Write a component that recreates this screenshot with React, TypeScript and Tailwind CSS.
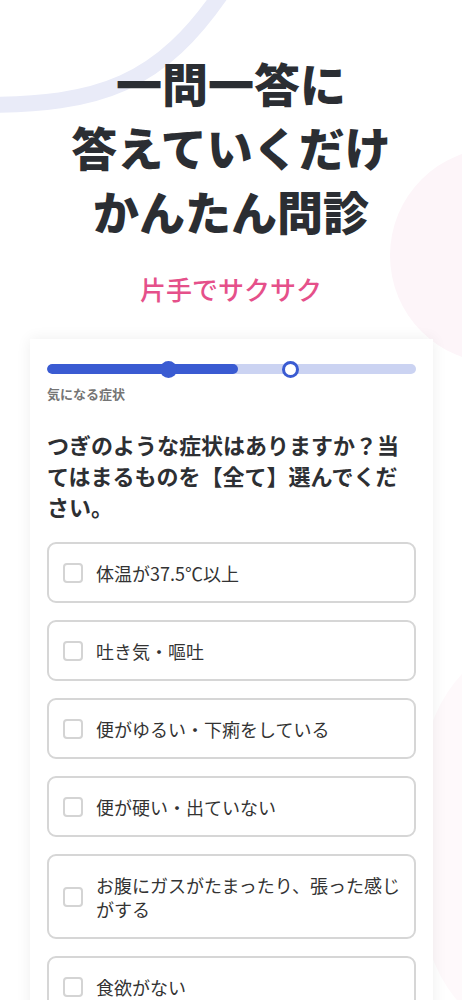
import React from "react";

const options: string[] = [
  "体温が37.5℃以上",
  "吐き気・嘔吐",
  "便がゆるい・下痢をしている",
  "便が硬い・出ていない",
  "お腹にガスがたまったり、張った感じがする",
  "食欲がない",
];

function Progress() {
  return (
    <div className="relative flex h-4 w-full items-center">
      <div className="flex h-[10px] w-full overflow-hidden rounded-full bg-[#cbd3f2]">
        <div className="h-full w-[191px] rounded-full bg-[#3a5bd2]" />
      </div>
      <span className="absolute left-[113px] h-[17px] w-[17px] rounded-full bg-[#3a5bd2]" />
      <span className="absolute left-[235px] h-[17px] w-[17px] rounded-full border-[3px] border-[#3a5bd2] bg-white" />
    </div>
  );
}

export default function App() {
  return (
    <div
      className="relative min-h-[1000px] w-full overflow-hidden bg-white"
      style={{ fontFamily: '"Noto Sans CJK JP", "Noto Sans", sans-serif' }}
    >
      {/* background decorations */}
      <svg className="absolute left-0 top-0" width="462" height="140" viewBox="0 0 462 140">
        <path
          d="M 225 -12 C 160 85, 100 105, -20 105"
          fill="none"
          stroke="#e9ebf8"
          strokeWidth="16"
        />
      </svg>
      <div className="absolute left-[390px] top-[148px] h-[215px] w-[215px] rounded-full bg-[#fdf5f9]" />
      <div className="absolute left-[424px] top-[630px] h-[420px] w-[300px] rounded-[140px] bg-[#fef9fb]" />

      <div className="relative z-10 flex flex-col items-center pt-[50px]">
        <h1 className="text-center text-[46px] font-black leading-[64px] text-[#2b2e33]">
          一問一答に
          <br />
          答えていくだけ
          <br />
          かんたん問診
        </h1>
        <p className="mt-[29px] text-[26px] font-medium leading-[36px] text-[#e5508a]">
          片手でサクサク
        </p>

        <div className="mt-[32px] w-full pl-[30px] pr-[29px]">
          <div className="bg-white px-[17px] pt-[22px] pb-10 shadow-[0_0_14px_rgba(0,0,0,0.07)]">
            <Progress />
            <p className="mt-2 text-[13px] font-bold leading-[18px] text-[#757575]">気になる症状</p>

            <p className="mt-[26px] text-[22px] font-bold leading-[31px] text-[#2d2f33]">
              つぎのような症状はありますか？当てはまるものを【全て】選んでください。
            </p>

            <div className="mt-[20px] flex flex-col gap-[17px]">
              {options.map((o) => (
                <div
                  key={o}
                  className="flex items-center gap-[13px] rounded-[9px] border-2 border-[#d6d6d6] bg-white pl-[14px] pr-[10px] pt-[17px] pb-[16px]"
                >
                  <span className="h-5 w-5 shrink-0 rounded-[4px] border-2 border-[#d4d4d4] bg-white" />
                  <span className="text-[18px] leading-[24px] text-[#333333]">{o}</span>
                </div>
              ))}
            </div>
          </div>
        </div>
      </div>
    </div>
  );
}
